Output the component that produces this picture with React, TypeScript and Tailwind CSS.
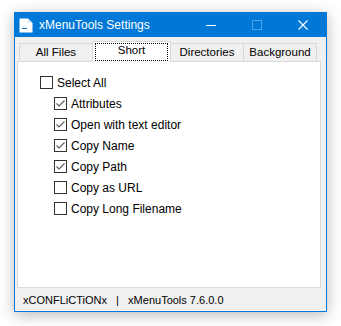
import React from "react";

const font = { fontFamily: '"Liberation Sans", Arial, sans-serif' };

function Check({ checked }: { checked: boolean }) {
  return (
    <div className="w-[13px] h-[13px] border border-[#333333] bg-white flex items-center justify-center shrink-0">
      {checked && (
        <svg width="11" height="11" viewBox="0 0 11 11">
          <polyline points="1.5,5.5 4,8 9.5,2.5" fill="none" stroke="#5a5a5a" strokeWidth="1.1" />
        </svg>
      )}
    </div>
  );
}

function Row({ label, checked, indent }: { label: string; checked: boolean; indent?: boolean }) {
  return (
    <div className={`h-[21px] flex items-center gap-[4px] ${indent ? "pl-[14px]" : ""}`}>
      <Check checked={checked} />
      <span className="text-[12px] text-black leading-none">{label}</span>
    </div>
  );
}

function Tab({ label, w, selected }: { label: string; w: number; selected?: boolean }) {
  if (selected) {
    return (
      <div
        className="relative z-10 h-[21px] -mb-px -ml-px bg-white border border-b-0 border-[#d9d9d9] flex px-[2px] pt-[1px] pb-[1px]"
        style={{ width: w }}
      >
        <div className="flex-1 border border-dotted border-black flex items-center justify-center pb-[3px]">
          <span className="text-[11.5px] text-black leading-none">{label}</span>
        </div>
      </div>
    );
  }
  return (
    <div
      className="h-[18px] -ml-px border border-b-0 border-[#d9d9d9] bg-[#f0f0f0] flex items-center justify-center"
      style={{ width: w }}
    >
      <span className="text-[11.5px] text-black leading-none">{label}</span>
    </div>
  );
}

export default function App() {
  return (
    <div className="w-[341px] h-[326px] bg-white pt-[12px] pl-[14px]" style={font}>
      <div className="w-[313px] h-[300px] border border-[#0078d7] bg-[#f0f0f0] flex flex-col shadow-[0_3px_14px_rgba(0,0,0,0.28)]">
        {/* Title bar */}
        <div className="h-[24px] bg-[#0078d7] flex items-center pl-[4px] shrink-0">
          <svg width="14" height="15" viewBox="0 0 14 15" className="shrink-0">
            <path d="M0.5 0.5 H9 L13.5 5 V14.5 H0.5 Z" fill="#ffffff" />
            <path d="M9 0.5 V5 H13.5" fill="#d6e8f7" />
            <rect x="3" y="10" width="5" height="1" fill="#0078d7" />
          </svg>
          <span className="ml-[6px] text-[12px] text-white leading-none">xMenuTools Settings</span>
          <div className="ml-auto flex h-full">
            <div className="w-[46px] h-full flex items-center justify-center">
              <div className="w-[10px] h-px bg-white" />
            </div>
            <div className="w-[46px] h-full flex items-center justify-center">
              <div className="w-[10px] h-[10px] border border-[#4ea1e4]" />
            </div>
            <div className="w-[46px] h-full flex items-center justify-center">
              <svg width="10" height="10" viewBox="0 0 10 10">
                <path d="M0.5 0.5 L9.5 9.5 M9.5 0.5 L0.5 9.5" stroke="#ffffff" strokeWidth="1.1" />
              </svg>
            </div>
          </div>
        </div>
        {/* Tab row */}
        <div className="h-[24px] flex items-end pl-[5px] shrink-0">
          <Tab label="All Files" w={74} />
          <Tab label="Short" w={79} selected />
          <Tab label="Directories" w={74} />
          <Tab label="Background" w={74} />
        </div>
        {/* Panel */}
        <div className="h-[227px] ml-[2px] mr-[5px] border border-[#d9d9d9] bg-white pt-[10px] pl-[22px] shrink-0">
          <Row label="Select All" checked={false} />
          <Row label="Attributes" checked indent />
          <Row label="Open with text editor" checked indent />
          <Row label="Copy Name" checked indent />
          <Row label="Copy Path" checked indent />
          <Row label="Copy as URL" checked={false} indent />
          <Row label="Copy Long Filename" checked={false} indent />
        </div>
        {/* Status */}
        <div className="flex-1 flex items-center pl-[8px] pt-[1px]">
          <span className="text-[11px] text-black leading-none whitespace-pre">
            xCONFLiCTiONx   |   xMenuTools 7.6.0.0
          </span>
        </div>
      </div>
    </div>
  );
}
